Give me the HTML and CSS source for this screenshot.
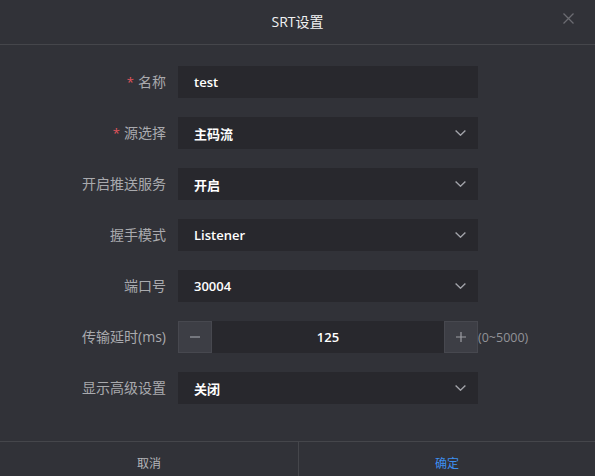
FILE: index.html
```html
<!DOCTYPE html>
<html lang="zh-CN">
<head>
<meta charset="utf-8">
<title>SRT设置</title>
<link rel="stylesheet" href="styles.css">
</head>
<body>
<div class="dialog">
  <header class="dlg-head">
    <h1 class="dlg-title">SRT设置</h1>
    <button class="dlg-close" aria-label="关闭">
      <svg width="11" height="11" viewBox="0 0 11 11"><path d="M0.5 0.5L10.5 10.5M10.5 0.5L0.5 10.5" stroke="#6b6c71" stroke-width="1.3" fill="none"/></svg>
    </button>
  </header>
  <form class="dlg-body">
    <label class="f-label"><span class="req">*</span>名称</label>
    <div class="f-input">test</div>
    <span></span>

    <label class="f-label"><span class="req">*</span>源选择</label>
    <div class="f-input f-select">主码流<svg class="chev" width="11" height="6" viewBox="0 0 11 6"><path d="M0.6 0.6L5.5 5.2L10.4 0.6" stroke="#a3a4aa" stroke-width="1.4" fill="none"/></svg></div>
    <span></span>

    <label class="f-label">开启推送服务</label>
    <div class="f-input f-select">开启<svg class="chev" width="11" height="6" viewBox="0 0 11 6"><path d="M0.6 0.6L5.5 5.2L10.4 0.6" stroke="#a3a4aa" stroke-width="1.4" fill="none"/></svg></div>
    <span></span>

    <label class="f-label">握手模式</label>
    <div class="f-input f-select">Listener<svg class="chev" width="11" height="6" viewBox="0 0 11 6"><path d="M0.6 0.6L5.5 5.2L10.4 0.6" stroke="#a3a4aa" stroke-width="1.4" fill="none"/></svg></div>
    <span></span>

    <label class="f-label">端口号</label>
    <div class="f-input f-select">30004<svg class="chev" width="11" height="6" viewBox="0 0 11 6"><path d="M0.6 0.6L5.5 5.2L10.4 0.6" stroke="#a3a4aa" stroke-width="1.4" fill="none"/></svg></div>
    <span></span>

    <label class="f-label">传输延时(ms)</label>
    <div class="f-number">
      <span class="num-btn"><svg width="10" height="10" viewBox="0 0 10 10"><path d="M0 5H10" stroke="#9d9ea4" stroke-width="1.2"/></svg></span>
      <span class="num-val">125</span>
      <span class="num-btn"><svg width="10" height="10" viewBox="0 0 10 10"><path d="M0 5H10M5 0V10" stroke="#9d9ea4" stroke-width="1.2"/></svg></span>
    </div>
    <span class="f-hint">(0~5000)</span>

    <label class="f-label">显示高级设置</label>
    <div class="f-input f-select">关闭<svg class="chev" width="11" height="6" viewBox="0 0 11 6"><path d="M0.6 0.6L5.5 5.2L10.4 0.6" stroke="#a3a4aa" stroke-width="1.4" fill="none"/></svg></div>
    <span></span>
  </form>
  <footer class="dlg-foot">
    <button class="foot-btn cancel">取消</button>
    <button class="foot-btn ok">确定</button>
  </footer>
</div>
</body>
</html>
```
FILE: styles.css
```css
html, body {
  margin: 0;
  padding: 0;
  background: #313238;
  overflow: hidden;
}
body {
  font-family: "Open Sans", "Noto Sans CJK SC", sans-serif;
  color: #fff;
}
.dialog {
  width: 595px;
  height: 476px;
  background: #313238;
}
.dlg-head {
  height: 44px;
  border-bottom: 1px solid #45464b;
  display: flex;
  align-items: center;
  justify-content: center;
  position: relative;
}
.dlg-title {
  margin: 0;
  font-size: 14px;
  font-weight: normal;
  line-height: 20px;
  color: #f2f2f3;
}
.dlg-close {
  position: absolute;
  right: 21px;
  top: 13px;
  width: 11px;
  height: 11px;
  padding: 0;
  border: 0;
  background: none;
  display: block;
}
.dlg-close svg { display: block; }
.dlg-body {
  margin: 0;
  padding: 21px 0 37px;
  display: grid;
  grid-template-columns: 166px 300px auto;
  column-gap: 12px;
  row-gap: 19px;
  align-items: center;
}
.f-label {
  text-align: right;
  font-size: 14px;
  line-height: 20px;
  color: #a9aaae;
  white-space: nowrap;
}
.req {
  color: #e0555c;
  margin-right: 4px;
  font-size: 13px;
}
.f-input {
  height: 32px;
  background: #28282d;
  box-sizing: border-box;
  padding: 0 16px;
  display: flex;
  align-items: center;
  font-size: 13px;
  font-weight: 600;
  color: #fff;
}
.f-select {
  justify-content: space-between;
  padding-right: 12px;
}
.chev { display: block; }
.f-number {
  height: 32px;
  display: grid;
  grid-template-columns: 34px 1fr 34px;
  background: #28282d;
}
.num-btn {
  background: #3d3e45;
  border: 1px solid #47484f;
  display: flex;
  align-items: center;
  justify-content: center;
}
.num-btn svg { display: block; }
.num-val {
  display: flex;
  align-items: center;
  justify-content: center;
  font-size: 13px;
  font-weight: 600;
  color: #fff;
}
.f-hint {
  margin-left: -12px;
  font-size: 12.5px;
  color: #929398;
  white-space: nowrap;
}
.dlg-foot {
  display: grid;
  grid-template-columns: 299px 1fr;
  border-top: 1px solid #45464b;
  height: 44px;
}
.foot-btn {
  border: 0;
  background: none;
  font-family: inherit;
  font-size: 12px;
  line-height: 20px;
  padding: 0;
  height: 44px;
}
.cancel {
  color: #b4b5b9;
  border-right: 1px solid #45464b;
}
.ok {
  color: #3d8ff0;
}
```
